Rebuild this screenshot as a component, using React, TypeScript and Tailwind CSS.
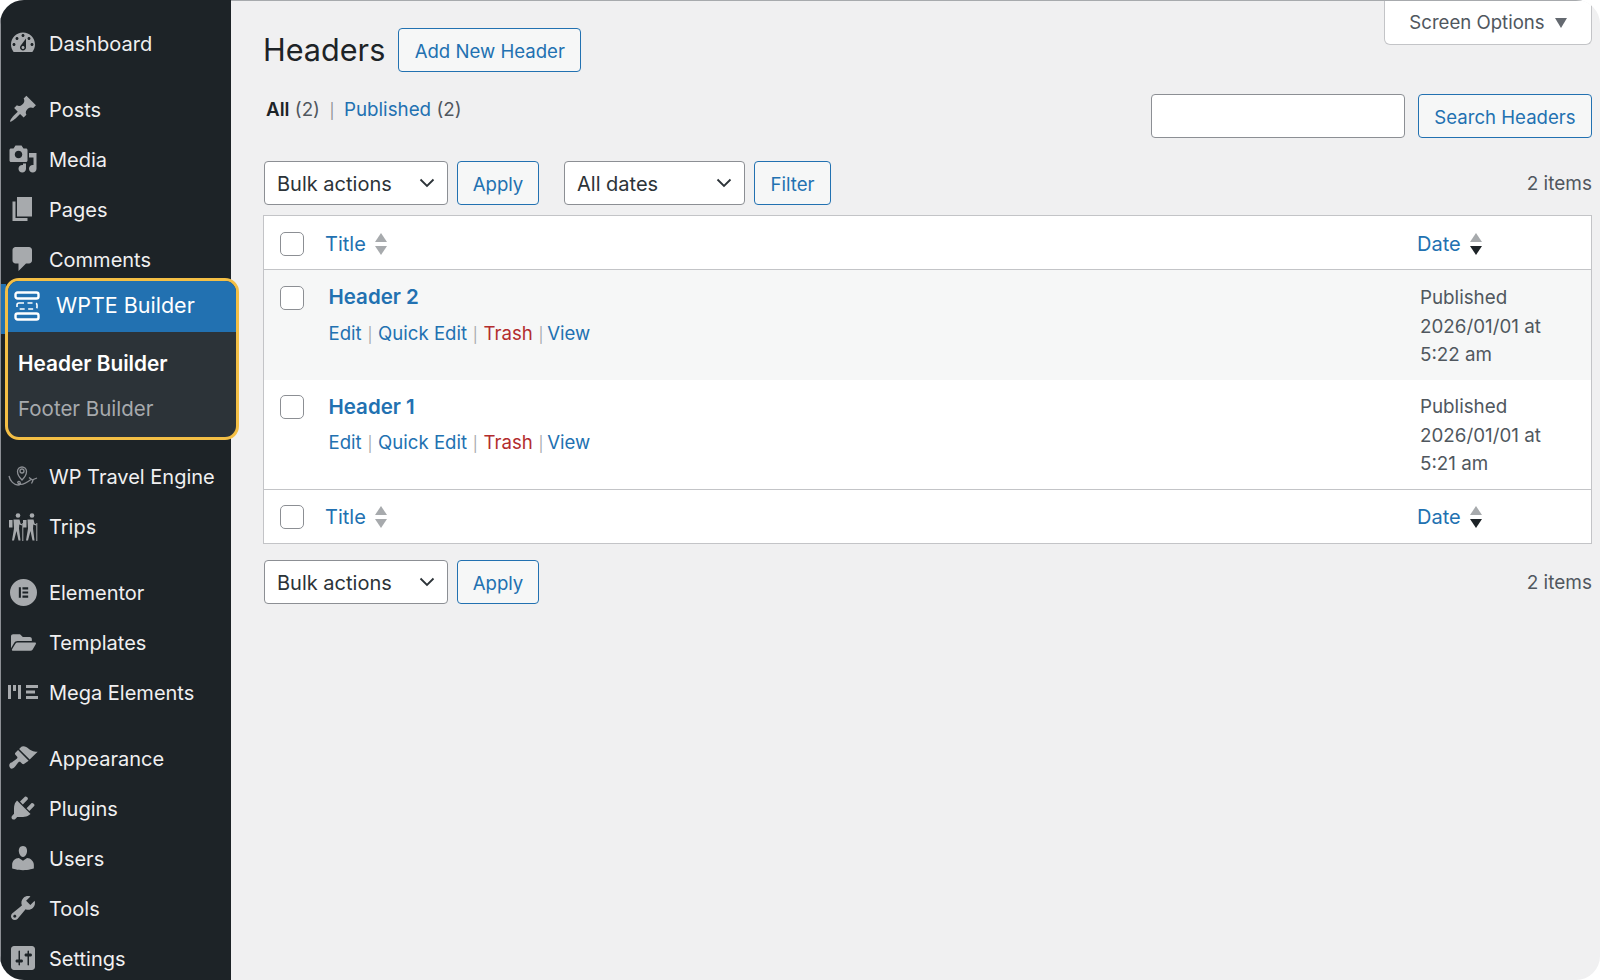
import { FaFolderOpen } from 'react-icons/fa'
import type { ReactNode } from 'react'

const font = "font-['Inter','Liberation_Sans',sans-serif]"

function Dash({ d }: { d: string }) {
  return (
    <svg viewBox="0 0 20 20" className="h-[30px] w-[30px] fill-[#a7aaad]">
      <path d={d} />
    </svg>
  )
}

function Hiker({ x }: { x: number }) {
  return (
    <g transform={`translate(${x} 0)`}>
      <circle cx="9" cy="4.500" r="2.300" className="fill-[#a7aaad]" />
      <path d="M0 9h3.500v7.500H0z" className="fill-[#a7aaad]" />
      <path d="M4.500 8.500h6l1 4 2 1-.4 1-2.800-1-.3 4 1.500 12h-2l-2-9.500-2.500 9.500h-2L5 17.500z" className="fill-[#a7aaad]" />
      <path d="M13.800 12v18" className="fill-none stroke-[#a7aaad]" strokeWidth="1" />
    </g>
  )
}

const icons: Record<string, ReactNode> = {
  dashboard: <Dash d="M3.76 16h12.48c1.1-1.37 1.76-3.11 1.76-5 0-4.42-3.58-8-8-8s-8 3.58-8 8c0 1.89.66 3.63 1.76 5zM10 4c.55 0 1 .45 1 1s-.45 1-1 1-1-.45-1-1 .45-1 1-1zM6 6c.55 0 1 .45 1 1s-.45 1-1 1-1-.45-1-1 .45-1 1-1zm8 0c.55 0 1 .45 1 1s-.45 1-1 1-1-.45-1-1 .45-1 1-1zm-5.37 5.55L12 7v6c0 1.1-.9 2-2 2s-2-.9-2-2c0-.57.24-1.08.63-1.45zM4 10c.55 0 1 .45 1 1s-.45 1-1 1-1-.45-1-1 .45-1 1-1zm12 0c.55 0 1 .45 1 1s-.45 1-1 1-1-.45-1-1 .45-1 1-1zm-5 3c0-.55-.45-1-1-1s-1 .45-1 1 .45 1 1 1 1-.45 1-1z" />,
  posts: <Dash d="M10.44 3.02l1.82-1.82 6.36 6.35-1.83 1.82c-1.05-.68-2.48-.57-3.41.36l-.75.75c-.92.93-1.04 2.35-.35 3.41l-1.83 1.82-2.41-2.41-2.8 2.79c-.42.42-3.38 2.71-3.8 2.29s1.86-3.39 2.28-3.81l2.79-2.79L4.1 9.36l1.83-1.82c1.05.69 2.48.57 3.4-.36l.75-.75c.93-.92 1.05-2.35.36-3.41z" />,
  media: <Dash d="M13 11V4c0-.55-.45-1-1-1h-1.67L9 1H5L3.67 3H2c-.55 0-1 .45-1 1v7c0 .55.45 1 1 1h10c.55 0 1-.45 1-1zM7 4.5c1.38 0 2.5 1.12 2.5 2.5S8.38 9.5 7 9.5 4.5 8.38 4.5 7 5.62 4.5 7 4.5zM14 6h5v10.5c0 1.38-1.12 2.5-2.5 2.5S14 17.88 14 16.5s1.12-2.5 2.5-2.5c.17 0 .34.02.5.05V9h-3V6zm-4 8.05V13h2v3.5c0 1.38-1.12 2.5-2.5 2.5S7 17.88 7 16.5 8.12 14 9.5 14c.17 0 .34.02.5.05z" />,
  pages: <Dash d="M6 15V2h10v13H6zm-1 1h8v2H3V5h2v11z" />,
  comments: <Dash d="M5 2h9c1.1 0 2 .9 2 2v7c0 1.1-.9 2-2 2h-2l-5 5v-5H5c-1.1 0-2-.9-2-2V4c0-1.1.9-2 2-2z" />,
  travel: (
    <svg viewBox="0 0 30 24" className="h-[24px] w-[30px] fill-none stroke-[#8c8f94]" strokeWidth="1.3">
      <circle cx="14" cy="7" r="2" />
      <path d="M14 16c-3-3-4.500-5.500-4.500-8.500a4.500 4.500 0 0 1 9 0c0 3-1.500 5.500-4.500 8.500z" />
      <path d="M1 12c1 5 5 9 9 9 2 0 3-1.500 2-3-1-1.200-3-.5-2 1 2 2.500 7 1 13-3.500" />
      <path d="M21 13.500l4 3-1.500 3M24 16l5-2" />
    </svg>
  ),
  trips: (
    <svg viewBox="0 0 30 30" className="h-[30px] w-[30px]">
      <Hiker x={1} />
      <Hiker x={15} />
    </svg>
  ),
  elementor: (
    <svg viewBox="0 0 26 26" className="h-[27px] w-[27px]">
      <path
        fillRule="evenodd"
        className="fill-[#a7aaad]"
        d="M13 0a13 13 0 1 0 0 26a13 13 0 0 0 0-26zM8.500 8h2v10h-2zM12 8h5.500v2H12zM12 12h5.500v2H12zM12 16h5.500v2H12z"
      />
    </svg>
  ),
  templates: <FaFolderOpen className="h-[25px] w-[25px] fill-[#a7aaad]" />,
  mega: (
    <svg viewBox="0 0 30 16" className="h-[16px] w-[30px] fill-[#a7aaad]">
      <path d="M0 1h3v14H0zM5 1h3v6H5zM10 1h3v14h-3zM18 1h12v3H18zM18 6.500h9v3h-9zM18 12h12v3H18z" />
    </svg>
  ),
  appearance: <Dash d="M14.48 11.060L7.410 3.990l1.500-1.500c.500-.560 2.300-.470 3.510.320 1.210.800 1.430 1.280 2.910 2.100 1.180.640 2.450 1.260 4.450.850zm-.710.710L6.700 4.700 4.930 6.470c-.390.390-.390 1.020 0 1.410l1.060 1.060c.390.390.390 1.030 0 1.420-.600.600-1.430 1.110-2.210 1.690-.350.260-.700.530-1.010.840C1.430 13.230.400 14.080 1.020 15.900s2.060 1.540 3.440.160c.310-.310.580-.660.840-1.010.580-.780 1.090-1.610 1.690-2.210.390-.390 1.020-.390 1.410 0l1.060 1.060c.390.390 1.020.390 1.410 0z" />,
  plugins: <Dash d="M13.110 4.360L9.870 7.600 8 5.730l3.240-3.240c.350-.340 1.050-.200 1.560.320.520.510.660 1.210.310 1.550zm-8 1.770l.910-1.120 9.010 9.010-1.190.840c-.710.710-2.630 1.160-3.820 1.160H6.140L4.900 17.260c-.590.590-1.540.590-2.120 0-.590-.580-.590-1.530 0-2.120l1.240-1.240v-3.880c0-1.130.400-3.190 1.090-3.890zm7.260 3.970l3.240-3.240c.340-.350 1.040-.210 1.550.310.520.510.660 1.210.310 1.550l-3.240 3.250z" />,
  users: <Dash d="M10 9.250c-2.270 0-2.730-3.440-2.730-3.440C7 4.020 7.820 2 9.970 2c2.160 0 2.980 2.020 2.710 3.810 0 0-.410 3.440-2.680 3.440zm0 2.570L12.720 10c2.390 0 4.520 2.330 4.520 4.530v2.490s-3.650 1.130-7.240 1.130c-3.650 0-7.240-1.130-7.240-1.130v-2.490c0-2.250 1.940-4.480 4.470-4.480z" />,
  tools: <Dash d="M16.680 9.770c-1.340 1.340-3.300 1.670-4.950.990l-5.410 6.520c-.990.990-2.590.990-3.580 0s-.990-2.590 0-3.570l6.520-5.420c-.680-1.650-.350-3.610.990-4.950 1.280-1.280 3.120-1.620 4.720-1.060l-2.890 2.890 2.820 2.820 2.860-2.870c.530 1.580.180 3.390-1.080 4.670zM3.810 16.210c.400.390 1.040.390 1.430 0 .400-.400.400-1.040 0-1.430-.390-.400-1.030-.400-1.430 0-.390.390-.390 1.030 0 1.430z" />,
  settings: <Dash d="M18 16V4c0-1.100-.900-2-2-2H4c-1.100 0-2 .900-2 2v12c0 1.100.900 2 2 2h12c1.100 0 2-.900 2-2zM8 11h1c.550 0 1 .450 1 1s-.450 1-1 1H8v1.500c0 .280-.220.500-.500.500s-.500-.220-.500-.500V13H6c-.550 0-1-.450-1-1s.450-1 1-1h1V5.500c0-.280.220-.500.500-.500s.500.220.500.500V11zm5-2h-1c-.550 0-1-.450-1-1s.450-1 1-1h1V5.500c0-.280.220-.500.500-.500s.500.220.500.500V7h1c.550 0 1 .450 1 1s-.450 1-1 1h-1v5.500c0 .280-.220.500-.500.500s-.500-.220-.500-.500V9z" />,
}

function MenuItem({ icon, label }: { icon: string; label: string }) {
  return (
    <div className="flex h-[50px] shrink-0 items-center gap-[11px] pl-[7px] text-[20px] text-[#f0f0f1]">
      <span className="flex w-[30px] items-center justify-center">{icons[icon]}</span>
      <span className="pt-[1px]">{label}</span>
    </div>
  )
}

function BuilderMenu() {
  return (
    <div className="relative z-10 -mt-[6px] mb-[11px] ml-[4px] w-[234px] shrink-0">
      <span className="absolute -left-[4px] top-[6px] h-[50px] w-[5px] bg-[#2271b1]" />
      <div className="relative overflow-hidden rounded-[14px] border-[3px] border-[#f4bf45] bg-[#2c3338]">
        <div className="flex h-[51px] items-center gap-[16px] bg-[#2271b1] pb-[2px] pl-[6px] text-[21.500px] text-white">
          <svg viewBox="0 0 26 30" className="h-[30px] w-[26px] fill-none stroke-white" strokeWidth="2.400">
            <rect x="1.500" y="1.500" width="23" height="6" rx="2" />
            <rect x="1.500" y="22.500" width="23" height="6" rx="2" />
            <rect x="3" y="12" width="20" height="6" rx="2" strokeWidth="1.600" strokeDasharray="5 3.500" />
          </svg>
          WPTE Builder
        </div>
        <div className="flex flex-col px-[10px] pb-[5px] pt-[9px]">
          <div className="flex h-[45px] items-center text-[20.800px] font-semibold text-white">Header Builder</div>
          <div className="flex h-[46px] items-center pt-[1px] text-[20.500px] text-[#a7aaad]">Footer Builder</div>
        </div>
      </div>
    </div>
  )
}

function Button({ children, className = '' }: { children: ReactNode; className?: string }) {
  return (
    <div className={`flex h-[44px] shrink-0 items-center justify-center rounded-[4px] border border-[#2271b1] bg-[#f6f7f7] pt-[4px] text-[18.600px] text-[#2271b1] ${className}`}>
      {children}
    </div>
  )
}

function Select({ label, className = '' }: { label: string; className?: string }) {
  return (
    <div className={`flex h-[44px] shrink-0 items-center justify-between rounded-[4px] border border-[#8c8f94] bg-white pl-[12px] pr-[12px] text-[20px] text-[#2c3338] ${className}`}>
      <span className="pt-[2px]">{label}</span>
      <svg viewBox="0 0 16 16" className="h-[16px] w-[16px] fill-none stroke-[#2c3338]" strokeWidth="1.800">
        <path d="M1.500 4.500L8 11l6.500-6.500" />
      </svg>
    </div>
  )
}

function Checkbox() {
  return <span className="block h-[24px] w-[24px] rounded-[5px] border border-[#8c8f94] bg-white" />
}

function SortArrows({ active = false }: { active?: boolean }) {
  return (
    <svg viewBox="0 0 12 24" className="h-[24px] w-[12px]">
      <path d="M6 1l6 9H0z" className="fill-[#a7aaad]" />
      <path d="M6 23l6-9H0z" className={active ? 'fill-[#1d2327]' : 'fill-[#a7aaad]'} />
    </svg>
  )
}

function HeadRow({ border }: { border: string }) {
  return (
    <div className={`flex h-[54px] items-center ${border}`}>
      <span className="ml-[16px] w-[45px]"><Checkbox /></span>
      <span className="flex flex-1 items-center gap-[9px] text-[20px] text-[#2271b1]">
        Title
        <SortArrows />
      </span>
      <span className="flex w-[174px] items-center gap-[9px] text-[20px] text-[#2271b1]">
        Date
        <SortArrows active />
      </span>
    </div>
  )
}

function Sep() {
  return <span className="mx-[0.500px] text-[15px] text-[#a7aaad]">|</span>
}

function Row({ title, time, striped }: { title: string; time: string; striped?: boolean }) {
  return (
    <div className={`flex items-start ${striped ? 'h-[110px] bg-[#f6f7f7] pt-[16px]' : 'h-[109px] bg-white pt-[15px]'}`}>
      <span className="ml-[16px] w-[48.500px]"><Checkbox /></span>
      <div className="flex-1">
        <div className={`text-[20.500px] leading-[24px] font-semibold text-[#2271b1] ${striped ? '-mt-[1px]' : ''}`}>{title}</div>
        <div className={`text-[18.600px] leading-[24px] text-[#2271b1] ${striped ? 'mt-[12px]' : 'mt-[11px]'}`}>
          Edit <Sep /> Quick Edit <Sep /> <span className="text-[#b32d2e]">Trash</span> <Sep /> <span className="-ml-[2px]">View</span>
        </div>
      </div>
      <div className="-mt-[2px] w-[171px] text-[18.800px] leading-[28.500px] text-[#50575e]">
        Published
        <br />
        2026/01/01 at
        <br />
        {time}
      </div>
    </div>
  )
}

export default function App() {
  return (
    <div className="h-screen w-full bg-white">
      <div className={`flex h-[980px] w-[1600px] overflow-hidden rounded-[24px] bg-[#f0f0f1] ${font}`}>
        <aside className="relative flex h-full w-[231px] shrink-0 flex-col border-l border-[#8c8f94] bg-[#1d2327] pt-[18px]">
          <MenuItem icon="dashboard" label="Dashboard" />
          <div className="h-[16px] shrink-0" />
          <MenuItem icon="posts" label="Posts" />
          <MenuItem icon="media" label="Media" />
          <MenuItem icon="pages" label="Pages" />
          <MenuItem icon="comments" label="Comments" />
          <BuilderMenu />
          <MenuItem icon="travel" label="WP Travel Engine" />
          <MenuItem icon="trips" label="Trips" />
          <div className="h-[16px] shrink-0" />
          <MenuItem icon="elementor" label="Elementor" />
          <MenuItem icon="templates" label="Templates" />
          <MenuItem icon="mega" label="Mega Elements" />
          <div className="h-[16px] shrink-0" />
          <MenuItem icon="appearance" label="Appearance" />
          <MenuItem icon="plugins" label="Plugins" />
          <MenuItem icon="users" label="Users" />
          <MenuItem icon="tools" label="Tools" />
          <MenuItem icon="settings" label="Settings" />
        </aside>

        <main className="relative flex min-w-0 flex-1 flex-col border-t border-[#a7aaad] pl-[32px] pr-[8px] pt-[27px]">
          <div className="absolute right-[8px] top-0 flex h-[44px] w-[208px] items-center justify-center gap-[10px] rounded-b-[6px] border border-t-0 border-[#c3c4c7] bg-white pt-[1px] text-[18.600px] text-[#50575e]">
            Screen Options
            <svg viewBox="0 0 12 10" className="h-[10px] w-[12px] fill-[#646970]">
              <path d="M0 0h12L6 10z" />
            </svg>
          </div>

          <div className="flex items-center gap-[13px]">
            <h1 className="text-[30.600px] font-normal leading-[44px] text-[#1d2327]">Headers</h1>
            <Button className="w-[183px]">Add New Header</Button>
          </div>

          <div className="mt-[22px] flex h-[44px] justify-between">
            <div className="pl-[3px] pt-[4px] text-[18.800px] leading-[24px] text-[#50575e]">
              <span className="font-semibold text-[#1d2327]">All</span> (2)
              <span className="mx-[9.500px] text-[15px] text-[#8c8f94]">|</span>
              <span className="text-[#2271b1]">Published</span> (2)
            </div>
            <div className="flex gap-[13px]">
              <div className="h-[44px] w-[254px] rounded-[4px] border border-[#8c8f94] bg-white" />
              <Button className="w-[174px]">Search Headers</Button>
            </div>
          </div>

          <div className="mt-[23px] flex items-center">
            <Select label="Bulk actions" className="ml-[1px] w-[184px]" />
            <Button className="ml-[9px] w-[82px]">Apply</Button>
            <Select label="All dates" className="ml-[25px] w-[181px]" />
            <Button className="ml-[9px] w-[77px]">Filter</Button>
            <span className="ml-auto pt-[2px] text-[19px] text-[#50575e]">2 items</span>
          </div>

          <div className="mt-[10px] border border-[#c3c4c7] bg-white">
            <HeadRow border="border-b border-[#c3c4c7] pt-[2px]" />
            <Row title="Header 2" time="5:22 am" striped />
            <Row title="Header 1" time="5:21 am" />
            <HeadRow border="border-t border-[#c3c4c7]" />
          </div>

          <div className="mt-[16px] flex items-center">
            <Select label="Bulk actions" className="ml-[1px] w-[184px]" />
            <Button className="ml-[9px] w-[82px]">Apply</Button>
            <span className="ml-auto pt-[2px] text-[19px] text-[#50575e]">2 items</span>
          </div>
        </main>
      </div>
    </div>
  )
}
